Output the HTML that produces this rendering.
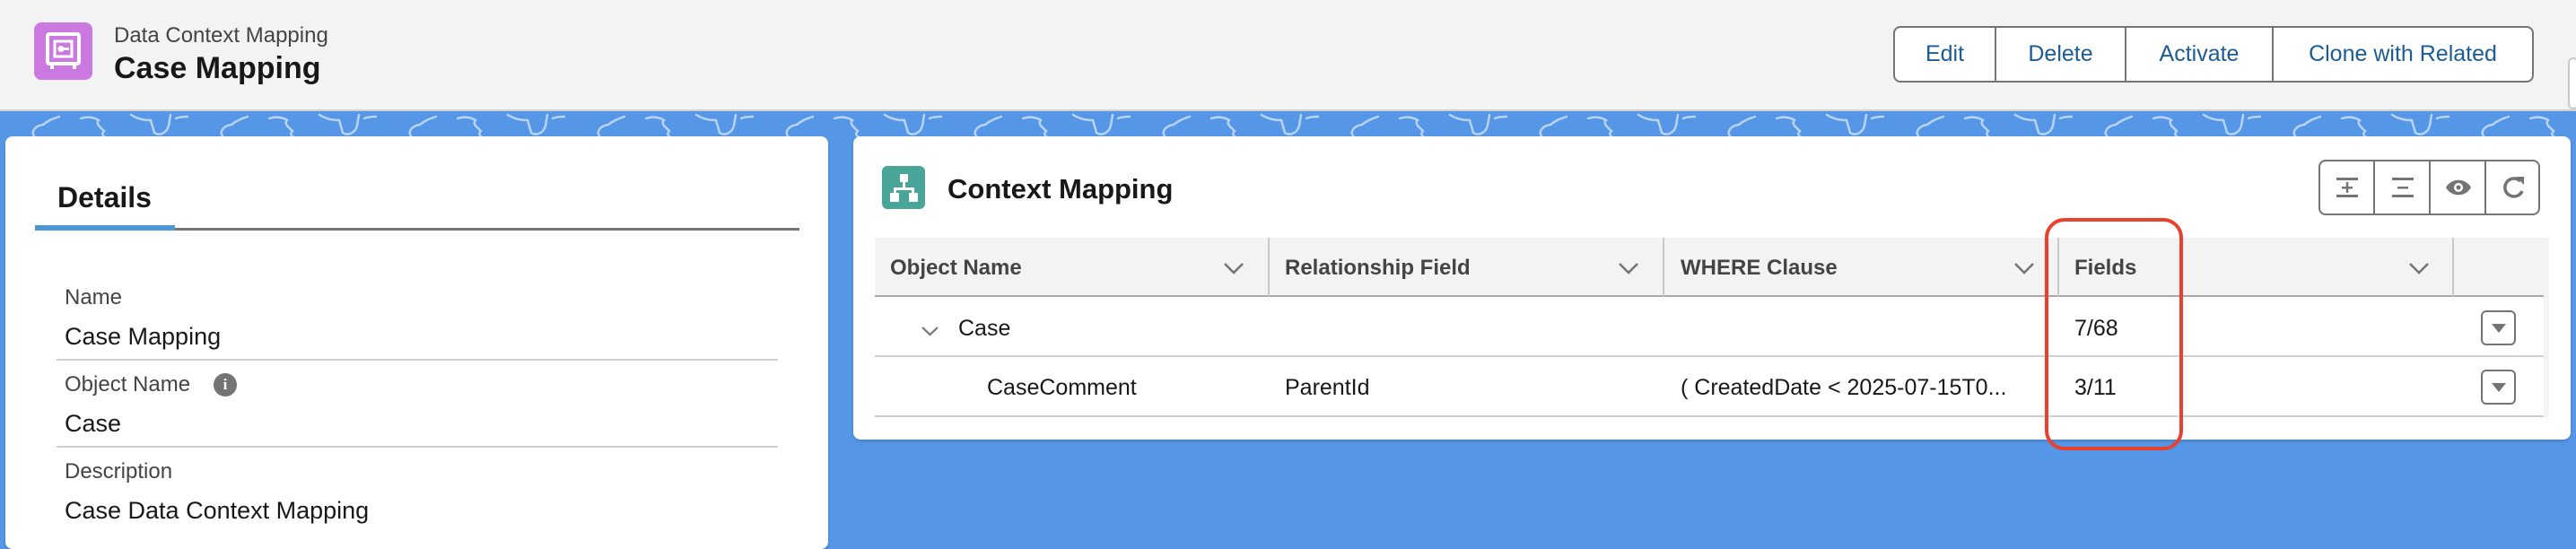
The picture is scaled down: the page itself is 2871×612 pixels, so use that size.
<!DOCTYPE html>
<html><head><meta charset="utf-8"><style>
*{box-sizing:border-box;margin:0;padding:0}
body{width:2871px;height:591px;overflow:hidden;background:#5596e6;font-family:"Liberation Sans",sans-serif;position:relative;color:#181818}
.abs{position:absolute}
.hdr{left:0;top:0;width:2871px;height:124px;background:#f3f3f3;border-bottom:2px solid #d0d0d0}
.btns{left:2110px;top:29px;width:714px;height:63px;border:2px solid #747474;border-radius:8px;background:#fff;display:flex}
.btns div{height:100%;display:flex;align-items:center;justify-content:center;color:#1b5c94;font-size:25px;border-right:2px solid #747474}
.btns div:last-child{border-right:none}
.card{background:#fff;border-radius:8px;box-shadow:0 2px 3px rgba(0,0,0,.15)}
.lbl{font-size:24px;color:#444;line-height:1}
.val{font-size:27px;color:#181818;line-height:1}
.sep{height:2px;background:#cfcfcf}
.th{font-size:24px;font-weight:bold;color:#444;line-height:1}
.td{font-size:25px;color:#181818;line-height:1}
.chev{width:24px;height:14px}
.vd{width:2px;background:#c9c9c9;top:265px;height:66px}
.rb{width:39px;height:39px;border:2px solid #747474;border-radius:6px;background:#fff}
.rb:after{content:"";position:absolute;left:10px;top:13px;border-left:8px solid transparent;border-right:8px solid transparent;border-top:10px solid #747474}
</style></head><body>
<div class="abs hdr"></div>
<div class="abs" style="left:38px;top:25px;width:65px;height:64px;background:#cb78e0;border-radius:8px"></div>
<svg class="abs" style="left:38px;top:25px" width="65" height="64" viewBox="0 0 65 64"><rect x="15" y="13" width="35" height="33" rx="2" fill="none" stroke="#fff" stroke-width="4"/><rect x="23" y="21" width="19" height="17" fill="none" stroke="#fff" stroke-width="3"/><circle cx="30" cy="29.5" r="3.5" fill="#fff"/><rect x="30" y="28" width="9" height="3" fill="#fff"/><rect x="18" y="46" width="4" height="6" fill="#fff"/><rect x="43" y="46" width="4" height="6" fill="#fff"/></svg>
<div class="abs" style="left:127px;top:26px;font-size:24px;color:#444">Data Context Mapping</div>
<div class="abs" style="left:127px;top:57px;font-size:34px;font-weight:bold;color:#181818">Case Mapping</div>
<div class="abs btns"><div style="width:113px">Edit</div><div style="width:145px">Delete</div><div style="width:164px">Activate</div><div style="flex:1">Clone with Related</div></div>
<div class="abs" style="left:2862px;top:64px;width:12px;height:58px;background:#fff;border:2px solid #c9c9c9;border-radius:6px"></div>
<svg class="abs" style="left:0;top:126px" width="2871" height="28"><defs><pattern id="p" width="210" height="28" patternUnits="userSpaceOnUse"><g fill="none" stroke="#b9d3f5" stroke-width="2.5" stroke-linecap="round"><path d="M38 26 C34 20 40 14 48 13 C54 8 60 6 66 4"/><path d="M90 6 C96 4 104 4 110 8 C106 12 112 16 116 20 C112 24 116 26 118 28"/><path d="M146 2 C152 6 160 8 168 8 L172 22 C178 26 186 22 188 14 L190 2"/><path d="M196 6 C200 4 206 4 210 4"/></g></pattern></defs><rect width="2871" height="28" fill="url(#p)"/></svg>
<!-- left card -->
<div class="abs card" style="left:6px;top:152px;width:917px;height:460px"></div>
<div class="abs" style="left:64px;top:202px;font-size:32px;font-weight:bold;color:#181818">Details</div>
<div class="abs" style="left:39px;top:254px;width:852px;height:3px;background:#747474"></div>
<div class="abs" style="left:39px;top:251px;width:156px;height:6px;background:#4e97d6"></div>
<div class="abs lbl" style="left:72px;top:320px">Name</div>
<div class="abs val" style="left:72px;top:362px">Case Mapping</div>
<div class="abs sep" style="left:63px;top:400px;width:804px"></div>
<div class="abs lbl" style="left:72px;top:417px">Object Name</div>
<div class="abs" style="left:238px;top:416px;width:26px;height:26px;border-radius:50%;background:#747474;color:#fff;font-size:17px;font-weight:bold;text-align:center;line-height:26px;font-family:'Liberation Serif',serif">i</div>
<div class="abs val" style="left:72px;top:459px">Case</div>
<div class="abs sep" style="left:63px;top:497px;width:804px"></div>
<div class="abs lbl" style="left:72px;top:514px">Description</div>
<div class="abs val" style="left:72px;top:556px">Case Data Context Mapping</div>
<!-- right card -->
<div class="abs card" style="left:951px;top:152px;width:1914px;height:338px"></div>
<div class="abs" style="left:983px;top:185px;width:48px;height:48px;background:#48a597;border-radius:6px"></div>
<svg class="abs" style="left:983px;top:185px" width="48" height="48" viewBox="0 0 48 48" fill="#fff"><rect x="20" y="9" width="9" height="9"/><rect x="23" y="18" width="3" height="7"/><rect x="13" y="24" width="23" height="3"/><rect x="13" y="24" width="3" height="7"/><rect x="33" y="24" width="3" height="7"/><rect x="9" y="30" width="10" height="10"/><rect x="30" y="30" width="10" height="10"/></svg>
<div class="abs" style="left:1056px;top:193px;font-size:31px;font-weight:bold;color:#181818">Context Mapping</div>
<div class="abs" style="left:2584px;top:178px;width:247px;height:62px;border:2px solid #747474;border-radius:8px;display:flex">
<div style="width:61px;border-right:2px solid #747474;position:relative"><svg width="61" height="58" viewBox="0 0 61 58"><rect x="18" y="18" width="24" height="3" fill="#747474"/><rect x="18" y="37" width="24" height="3" fill="#747474"/><rect x="24" y="28" width="12" height="2.5" fill="#747474"/><rect x="28.8" y="23" width="2.5" height="12" fill="#747474"/></svg></div>
<div style="width:62px;border-right:2px solid #747474"><svg width="62" height="58"><rect x="19" y="18" width="24" height="3" fill="#747474"/><rect x="19" y="37" width="24" height="3" fill="#747474"/><rect x="25" y="28" width="12" height="2.5" fill="#747474"/></svg></div>
<div style="width:62px;border-right:2px solid #747474"><svg width="62" height="58"><path d="M17 29 C23 18 39 18 45 29 C39 40 23 40 17 29Z" fill="#747474"/><circle cx="31" cy="29" r="5" fill="#fff"/><circle cx="31" cy="29" r="2.5" fill="#747474"/></svg></div>
<div style="flex:1"><svg width="60" height="58"><path d="M38 22 A10 10 0 1 0 40 33" fill="none" stroke="#747474" stroke-width="3.5"/><path d="M33 17 L42 17 L42 26 Z" fill="#747474"/></svg></div>
</div>
<!-- table -->
<div class="abs" style="left:975px;top:265px;width:1860px;height:66px;background:#f3f3f3;border-bottom:2px solid #a8a8a8"></div>
<div class="abs" style="left:2835px;top:265px;width:6px;height:200px;background:#f3f3f3"></div>
<div class="abs vd" style="left:1413px"></div><div class="abs vd" style="left:1853px"></div><div class="abs vd" style="left:2293px"></div><div class="abs vd" style="left:2733px"></div>
<div class="abs th" style="left:992px;top:287px">Object Name</div>
<div class="abs th" style="left:1432px;top:287px">Relationship Field</div>
<div class="abs th" style="left:1873px;top:287px">WHERE Clause</div>
<div class="abs th" style="left:2312px;top:287px">Fields</div>
<svg class="abs chev" style="left:1363px;top:292px" viewBox="0 0 24 14"><path d="M2 2 L12 12 L22 2" fill="none" stroke="#747474" stroke-width="2.5"/></svg>
<svg class="abs chev" style="left:1803px;top:292px" viewBox="0 0 24 14"><path d="M2 2 L12 12 L22 2" fill="none" stroke="#747474" stroke-width="2.5"/></svg>
<svg class="abs chev" style="left:2244px;top:292px" viewBox="0 0 24 14"><path d="M2 2 L12 12 L22 2" fill="none" stroke="#747474" stroke-width="2.5"/></svg>
<svg class="abs chev" style="left:2684px;top:292px" viewBox="0 0 24 14"><path d="M2 2 L12 12 L22 2" fill="none" stroke="#747474" stroke-width="2.5"/></svg>
<svg class="abs" style="left:1026px;top:363px" width="21" height="12" viewBox="0 0 21 12"><path d="M2 2 L10.5 10 L19 2" fill="none" stroke="#747474" stroke-width="2.2"/></svg>
<div class="abs td" style="left:1068px;top:354px">Case</div>
<div class="abs td" style="left:2312px;top:354px">7/68</div>
<div class="abs rb" style="left:2765px;top:346px"></div>
<div class="abs sep" style="left:975px;top:396px;width:1860px"></div>
<div class="abs td" style="left:1100px;top:420px">CaseComment</div>
<div class="abs td" style="left:1432px;top:420px">ParentId</div>
<div class="abs td" style="left:1873px;top:420px">( CreatedDate &lt; 2025-07-15T0...</div>
<div class="abs td" style="left:2312px;top:420px">3/11</div>
<div class="abs rb" style="left:2765px;top:412px"></div>
<div class="abs sep" style="left:975px;top:463px;width:1860px"></div>
<div class="abs" style="left:2279px;top:243px;width:154px;height:259px;border:4px solid #e8412c;border-radius:22px"></div>
</body></html>
